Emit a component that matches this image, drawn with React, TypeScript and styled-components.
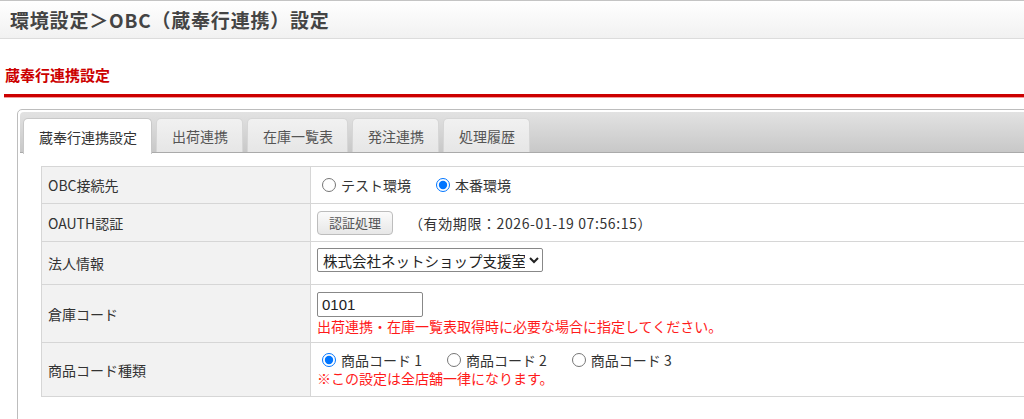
import React, { useState } from "react";
import styled, { createGlobalStyle } from "styled-components";

const GlobalStyle = createGlobalStyle`
  html, body {
    margin: 0;
    padding: 0;
    background: #fff;
    overflow: hidden;
  }
  body {
    font-family: "Noto Sans CJK JP", "Noto Sans", sans-serif;
    color: #333;
  }
`;

const Header = styled.header`
  height: 37px;
  border-top: 1px solid #c4c4c4;
  border-bottom: 1px solid #dcdcdc;
  background: linear-gradient(#ffffff, #f1f1f1);
  display: flex;
  align-items: center;
  padding-left: 10px;

  h1 {
    margin: 0;
    font-size: 19px;
    font-weight: bold;
    color: #444;
    letter-spacing: 0.8px;
  }
`;

const SectionTitle = styled.h2`
  margin: 26px 0 0 4px;
  padding: 0 0 9px 1px;
  font-size: 15px;
  line-height: 20px;
  font-weight: bold;
  color: #cc0000;
  border-bottom: 3px solid #cc0000;
  box-shadow: 0 1px 0 #f39a9a;
`;

const TabPanel = styled.div`
  margin: 12px 0 0 17px;
  width: 1100px;
  height: 320px;
  border: 1px solid #bdbdbd;
  border-radius: 5px 0 0 0;
  padding: 2px;
`;

const TabBar = styled.div`
  height: 34px;
  padding: 6px 0 0 3px;
  display: flex;
  gap: 4px;
  background: linear-gradient(#e2e2e2, #c8c8c8);
  border-radius: 4px 0 0 0;
  border-bottom: 1px solid #aaa;
`;

const Tab = styled.div<{ $active?: boolean }>`
  height: ${(p) => (p.$active ? "35px" : "33px")};
  padding: 0 14px 0 15px;
  display: flex;
  align-items: center;
  font-size: 14px;
  color: ${(p) => (p.$active ? "#333" : "#555")};
  background: ${(p) => (p.$active ? "#fff" : "linear-gradient(#f1f1f1, #e6e6e6)")};
  border: 1px solid ${(p) => (p.$active ? "#c8c8c8" : "#d6d6d6")};
  border-bottom: none;
  border-radius: 5px 5px 0 0;
  margin-bottom: ${(p) => (p.$active ? "-1px" : "0")};
  z-index: ${(p) => (p.$active ? 1 : 0)};
  cursor: pointer;
`;

const Content = styled.div`
  padding: 13px 0 0 21px;
`;

const Table = styled.table`
  width: 1000px;
  border-collapse: collapse;
  font-size: 14px;

  th, td {
    border: 1px solid #d6d6d6;
  }
`;

const Label = styled.th`
  width: 256px;
  background: #f2f2f2;
  text-align: left;
  font-weight: normal;
  padding: 0 6px;
  color: #333;
`;

const Value = styled.td<{ $h: number; $top?: boolean }>`
  height: ${(p) => p.$h}px;
  padding: ${(p) => (p.$top ? "6px 6px 0" : "0 6px")};
  vertical-align: ${(p) => (p.$top ? "top" : "middle")};
`;

const Radios = styled.div`
  display: flex;
  align-items: center;
  gap: 20px;
  height: 18px;
`;

const RadioLabel = styled.label`
  display: flex;
  align-items: center;
  font-size: 14px;
  color: #333;

  input {
    margin: 0 5px 0 5px;
    width: 14px;
    height: 14px;
  }
`;

const AuthLine = styled.div`
  display: flex;
  align-items: center;
`;

const Button = styled.button`
  height: 24px;
  padding: 0 11px;
  font-family: inherit;
  font-size: 13px;
  color: #555;
  background: linear-gradient(#fbfbfb, #e7e7e7);
  border: 1px solid #bdbdbd;
  border-radius: 4px;
`;

const Expiry = styled.span`
  margin-left: 16px;
  font-size: 14px;
  letter-spacing: 0.6px;
  color: #333;
`;

const Select = styled.select`
  display: block;
  width: 226px;
  height: 24px;
  font-family: inherit;
  font-size: 14.5px;
  color: #222;
  border: 1px solid #888;
  border-radius: 2px;
  padding: 0 1px;
  background: #fff;
`;

const TextInput = styled.input`
  display: block;
  width: 96px;
  height: 21px;
  font-family: "Liberation Sans", "Noto Sans", sans-serif;
  font-size: 15px;
  color: #222;
  border: 1px solid #888;
  border-radius: 2px;
  padding: 1px 4px;
`;

const Note = styled.div`
  color: #ff1a1a;
  font-size: 14px;
  line-height: 19px;
`;

const tabs = ["蔵奉行連携設定", "出荷連携", "在庫一覧表", "発注連携", "処理履歴"];

export default function App() {
  const [env, setEnv] = useState("prod");
  const [code, setCode] = useState("1");
  const [whs, setWhs] = useState("0101");

  return (
    <>
      <GlobalStyle />
      <Header>
        <h1>環境設定＞OBC（蔵奉行連携）設定</h1>
      </Header>
      <SectionTitle>蔵奉行連携設定</SectionTitle>
      <TabPanel>
        <TabBar>
          {tabs.map((t, i) => (
            <Tab key={t} $active={i === 0}>
              {t}
            </Tab>
          ))}
        </TabBar>
        <Content>
          <Table>
            <tbody>
              <tr>
                <Label>OBC接続先</Label>
                <Value $h={36}>
                  <Radios>
                    <RadioLabel>
                      <input type="radio" checked={env === "test"} onChange={() => setEnv("test")} />
                      テスト環境
                    </RadioLabel>
                    <RadioLabel>
                      <input type="radio" checked={env === "prod"} onChange={() => setEnv("prod")} />
                      本番環境
                    </RadioLabel>
                  </Radios>
                </Value>
              </tr>
              <tr>
                <Label>OAUTH認証</Label>
                <Value $h={37}>
                  <AuthLine>
                    <Button>認証処理</Button>
                    <Expiry>（有効期限：2026-01-19 07:56:15）</Expiry>
                  </AuthLine>
                </Value>
              </tr>
              <tr>
                <Label>法人情報</Label>
                <Value $h={36} $top>
                  <Select>
                    <option>株式会社ネットショップ支援室</option>
                  </Select>
                </Value>
              </tr>
              <tr>
                <Label>倉庫コード</Label>
                <Value $h={57}>
                  <TextInput value={whs} onChange={(e) => setWhs(e.target.value)} />
                  <Note>出荷連携・在庫一覧表取得時に必要な場合に指定してください。</Note>
                </Value>
              </tr>
              <tr>
                <Label>商品コード種類</Label>
                <Value $h={53}>
                  <Radios>
                    {["1", "2", "3"].map((n) => (
                      <RadioLabel key={n}>
                        <input type="radio" checked={code === n} onChange={() => setCode(n)} />
                        商品コード {n}
                      </RadioLabel>
                    ))}
                  </Radios>
                  <Note>※この設定は全店舗一律になります。</Note>
                </Value>
              </tr>
            </tbody>
          </Table>
        </Content>
      </TabPanel>
    </>
  );
}
